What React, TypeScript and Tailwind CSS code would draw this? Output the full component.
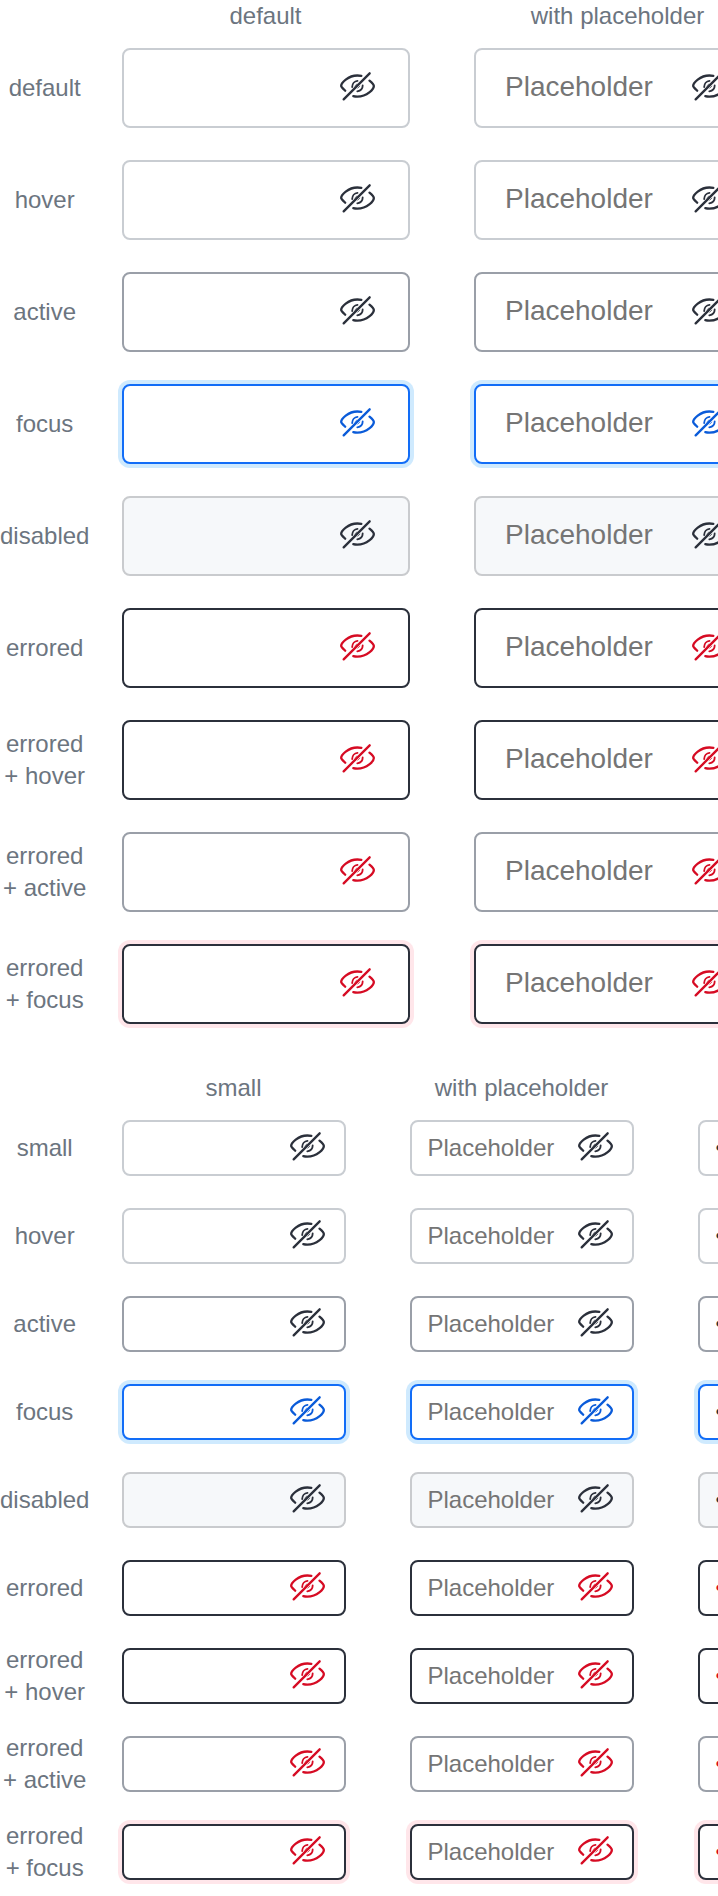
type Kind = 'empty' | 'placeholder' | 'value';

type State = {
  label: string[];
  box: string;
  icon: string;
  value: string;
};

const dark = 'text-[#2b303b]';
const red = 'text-[#d60b23]';

const states: State[] = [
  { label: ['default'], box: 'border-[#c9cdd2] bg-white', icon: dark, value: dark },
  { label: ['hover'], box: 'border-[#c9cdd2] bg-white', icon: dark, value: dark },
  { label: ['active'], box: 'border-[#9a9fa8] bg-white', icon: dark, value: dark },
  {
    label: ['focus'],
    box: 'border-[#126df7] bg-white shadow-[0_0_0_4px_#cfeafe]',
    icon: 'text-[#0a5bd9]',
    value: dark,
  },
  { label: ['disabled'], box: 'border-[#c9cbce] bg-[#f6f8fa]', icon: dark, value: dark },
  { label: ['errored'], box: 'border-[#2b303b] bg-white', icon: red, value: red },
  { label: ['errored', '+ hover'], box: 'border-[#2b303b] bg-white', icon: red, value: red },
  { label: ['errored', '+ active'], box: 'border-[#9a9fa8] bg-white', icon: red, value: red },
  {
    label: ['errored', '+ focus'],
    box: 'border-[#2b303b] bg-white shadow-[0_0_0_4px_#ffe6ea]',
    icon: red,
    value: red,
  },
];

function EyeOff({ className }: { className: string }) {
  return (
    <svg
      viewBox="0 0 120 108"
      className={`h-9 w-10 shrink-0 ${className}`}
      fill="none"
      stroke="currentColor"
      strokeWidth="7"
      strokeLinecap="round"
      strokeLinejoin="round"
    >
      <path d="M23 94 101 16" />
      <path d="M27.500 68C20 61 15.500 57 15.500 54C15.500 45 36 22.500 64 22.500C69 22.500 72 22.500 76 23.500" />
      <path d="M52 84.500C57 86 60 86 64 86C94 86 113.500 63 113.500 54C113.500 50 108 44 100.500 38" />
      <path strokeWidth="5.5" d="M48.500 57C48.500 47.500 55.500 39.500 64.500 38.500" />
      <path strokeWidth="5.500" d="M64 70C73.500 68.500 80 61.500 80 52.500" />
      <path strokeWidth="2" d="M56.500 54 62.500 48" />
      <path strokeWidth="2" d="M65.500 60.500 71.500 54.500" />
    </svg>
  );
}

function Field({ state, kind, small }: { state: State; kind: Kind; small: boolean }) {
  return (
    <div
      className={`flex shrink-0 items-center rounded-lg border-2 ${
        small ? 'h-14 w-56 pl-[15.5px] pr-[18px] text-[24px]' : 'h-20 w-72 pl-[29px] pr-8 text-[28px]'
      } ${state.box}`}
    >
      <span
        className={`flex-1 leading-8 ${small ? '' : '-mt-0.5'} ${
          kind === 'value' ? state.value : 'text-[#757575]'
        }`}
      >
        {kind === 'placeholder' && 'Placeholder'}
        {kind === 'value' && '••••••••'}
      </span>
      <EyeOff className={`-mt-1 ${state.icon}`} />
    </div>
  );
}

function Matrix({ small, headings, kinds }: { small: boolean; headings: string[]; kinds: Kind[] }) {
  return (
    <section className="flex flex-col gap-8">
      <div className="-mb-4 flex h-8 gap-16 pl-[121.5px]">
        {headings.map((h) => (
          <div key={h} className={`shrink-0 text-center ${small ? 'w-56' : 'w-72'}`}>
            {h}
          </div>
        ))}
      </div>
      {states.map((state, i) => (
        <div key={i} className={`flex items-center ${small ? 'h-14' : 'h-20'}`}>
          <div className="w-[89.4px] shrink-0 text-center whitespace-nowrap">
            {(small && i === 0 ? ['small'] : state.label).map((line) => (
              <div key={line}>{line}</div>
            ))}
          </div>
          <div className="flex gap-16 pl-[32.6px]">
            {kinds.map((kind) => (
              <Field key={kind} state={state} kind={kind} small={small} />
            ))}
          </div>
        </div>
      ))}
    </section>
  );
}

export default function App() {
  return (
    <main className="flex h-[1896px] w-[718px] flex-col gap-12 overflow-hidden bg-white font-['Liberation_Sans',Arial,sans-serif] text-[24px] leading-8 text-[#6c757f]">
      <Matrix small={false} headings={['default', 'with placeholder']} kinds={['empty', 'placeholder']} />
      <Matrix
        small
        headings={['small', 'with placeholder', 'with value']}
        kinds={['empty', 'placeholder', 'value']}
      />
    </main>
  );
}
